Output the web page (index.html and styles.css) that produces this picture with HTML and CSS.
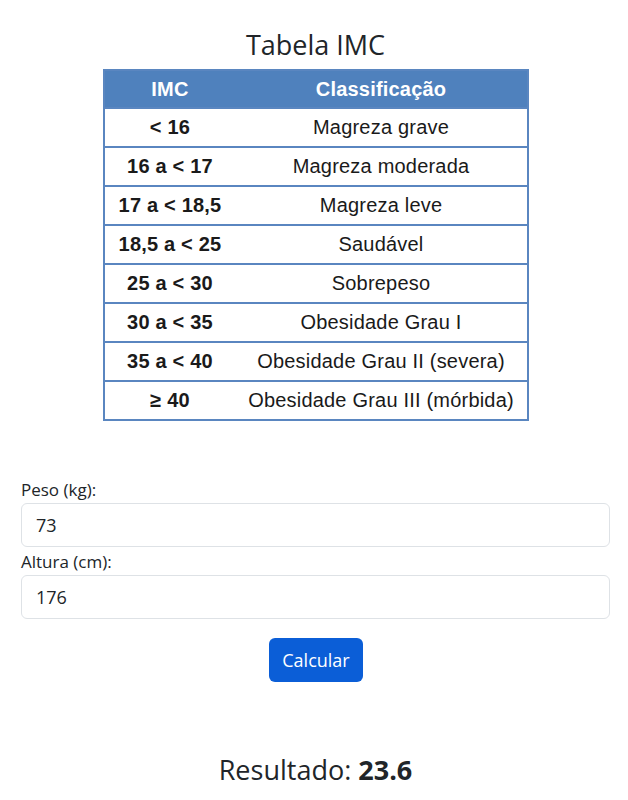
FILE: index.html
```html
<!DOCTYPE html>
<html lang="pt-BR">
<head>
<meta charset="utf-8">
<title>Tabela IMC</title>
<link rel="stylesheet" href="styles.css">
</head>
<body>
<main class="page">
  <h1 class="title">Tabela IMC</h1>
  <table class="imc-table">
    <thead>
      <tr><th class="col-imc">IMC</th><th>Classificação</th></tr>
    </thead>
    <tbody>
      <tr><td class="col-imc">&lt; 16</td><td>Magreza grave</td></tr>
      <tr><td class="col-imc">16 a &lt; 17</td><td>Magreza moderada</td></tr>
      <tr><td class="col-imc">17 a &lt; 18,5</td><td>Magreza leve</td></tr>
      <tr><td class="col-imc">18,5 a &lt; 25</td><td>Saudável</td></tr>
      <tr><td class="col-imc">25 a &lt; 30</td><td>Sobrepeso</td></tr>
      <tr><td class="col-imc">30 a &lt; 35</td><td>Obesidade Grau I</td></tr>
      <tr><td class="col-imc">35 a &lt; 40</td><td>Obesidade Grau II (severa)</td></tr>
      <tr><td class="col-imc">≥ 40</td><td>Obesidade Grau III (mórbida)</td></tr>
    </tbody>
  </table>

  <form class="imc-form">
    <label class="field-label" for="peso">Peso (kg):</label>
    <input class="field-input" id="peso" type="text" value="73">
    <label class="field-label second" for="altura">Altura (cm):</label>
    <input class="field-input" id="altura" type="text" value="176">
    <div class="actions">
      <button class="btn-primary" type="button">Calcular</button>
    </div>
  </form>

  <h2 class="result">Resultado: <strong>23.6</strong></h2>
</main>
</body>
</html>
```

FILE: styles.css
```css
* { box-sizing: border-box; }

body {
  margin: 0;
  background: #ffffff;
  color: #212529;
  font-family: "Open Sans", "Noto Sans", sans-serif;
}

.page {
  padding: 0 18px 0 21px;
  display: flex;
  flex-direction: column;
}

.title {
  margin: 28px 0 0;
  font-size: 27px;
  line-height: 34px;
  font-weight: 500;
  text-align: center;
  color: #212529;
}

.imc-table {
  align-self: center;
  margin: 7px 0 0 0;
  width: 426px;
  border-collapse: collapse;
  border: 2px solid #5a86c0;
  font-family: "Liberation Sans", Arial, sans-serif;
  font-size: 20px;
  letter-spacing: 0.2px;
  color: #1a1a1a;
}

.imc-table th {
  background: #4f81bd;
  color: #ffffff;
  font-weight: 700;
  height: 38px;
  padding: 0;
  text-align: center;
}

.imc-table td {
  height: 39px;
  padding: 0;
  text-align: center;
  border-top: 2px solid #5a86c0;
}

.imc-table .col-imc {
  width: 132px;
  font-weight: 700;
}

.imc-form {
  display: flex;
  flex-direction: column;
  margin-top: 58px;
}

.field-label {
  font-size: 17px;
  line-height: 22px;
  margin-bottom: 2px;
}

.field-label.second {
  margin-top: 4px;
}

.field-input {
  height: 44px;
  width: 100%;
  border: 1px solid #dee2e6;
  border-radius: 6px;
  padding: 0 14px;
  font-family: inherit;
  font-size: 18px;
  color: #212529;
  background: #fff;
}

.actions {
  display: flex;
  justify-content: center;
  margin-top: 19px;
  padding-left: 1px;
}

.btn-primary {
  width: 94px;
  height: 44px;
  border: none;
  border-radius: 6px;
  background: #0b5ed7;
  color: #fff;
  font-family: inherit;
  font-size: 18px;
}

.result {
  margin: 73px 0 0;
  font-size: 27px;
  line-height: 30px;
  font-weight: 400;
  text-align: center;
}

.result strong { font-weight: 700; }
```
